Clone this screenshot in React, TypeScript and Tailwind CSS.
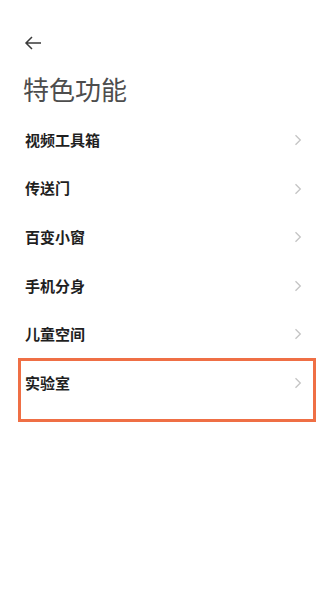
import React from "react";

const items = ["视频工具箱", "传送门", "百变小窗", "手机分身", "儿童空间", "实验室"];

function Chevron() {
  return (
    <svg width="8" height="12" viewBox="0 0 8 12" fill="none">
      <path d="M1.5 1.2L6.3 6L1.5 10.8" stroke="#c4c4c4" strokeWidth="1.3" />
    </svg>
  );
}

export default function App() {
  return (
    <div
      className="w-[325px] h-[600px] bg-white"
      style={{ fontFamily: '"Noto Sans CJK SC", "Noto Sans", sans-serif' }}
    >
      <div className="pt-[35px] pl-[24px] h-[50px]">
        <svg width="18" height="16" viewBox="0 0 18 16" fill="none">
          <path d="M17 8H2M8 2L2 8l6 6" stroke="#3a3a3a" strokeWidth="1.5" />
        </svg>
      </div>
      <div className="pl-[23px] h-[65.75px] pt-[24px] text-[26px] leading-[30px] text-[#4d4d4d]">
        特色功能
      </div>
      <div className="flex flex-col">
        {items.map((name) => (
          <div key={name} className="relative h-[48.6px] flex items-center pl-[25px] pr-[23px]">
            <span className="flex-1 text-[15px] font-bold text-[#1f1f1f]">{name}</span>
            <Chevron />
            {name === "实验室" && (
              <div className="absolute left-[18px] top-[-1px] w-[298px] h-[64px] border-[3px] border-[#ef6f45]" />
            )}
          </div>
        ))}
      </div>
    </div>
  );
}
